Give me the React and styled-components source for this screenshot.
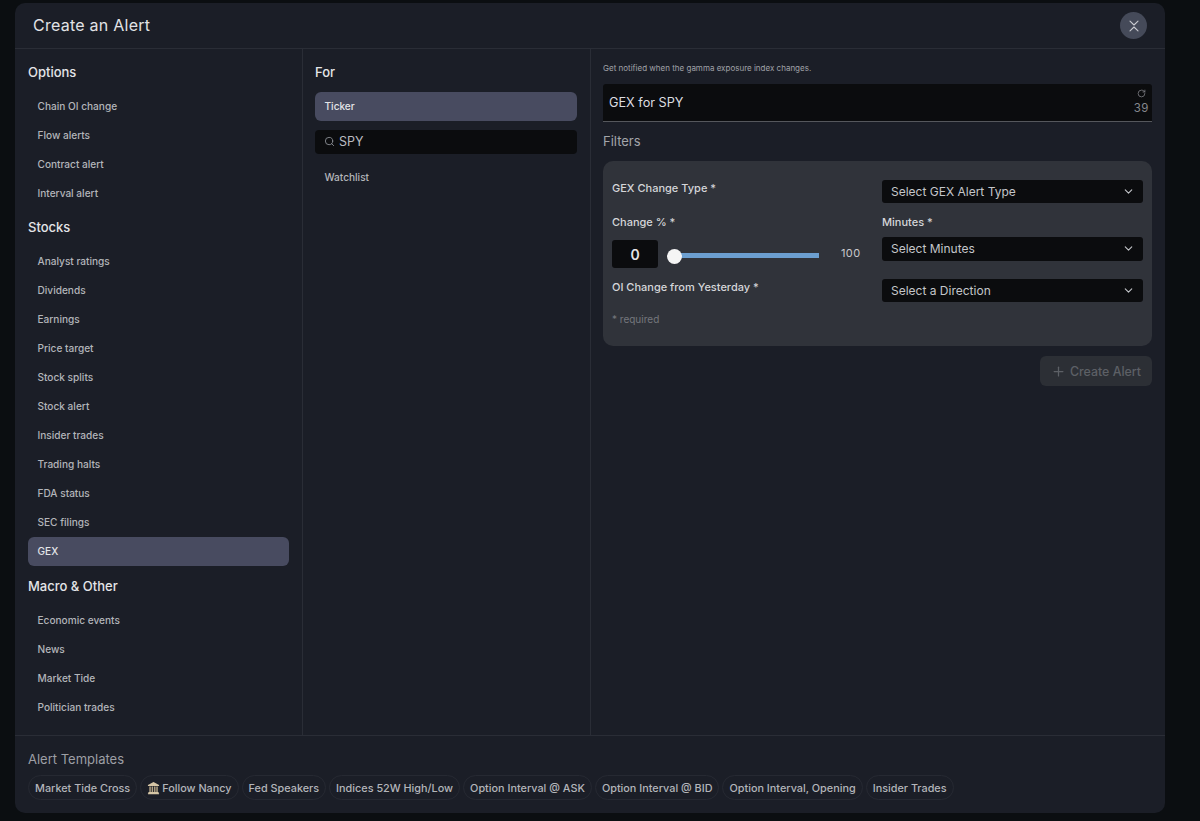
import React from 'react';
import styled, { createGlobalStyle } from 'styled-components';
import { Search, ChevronDown, RotateCw, Plus } from 'lucide-react';

const GlobalStyle = createGlobalStyle`
  html, body {
    margin: 0;
    background: #0b0e11;
    font-family: Inter, "Liberation Sans", sans-serif;
  }
  * { box-sizing: border-box; }
`;

const SECTIONS = [
  { title: 'Options', items: ['Chain OI change', 'Flow alerts', 'Contract alert', 'Interval alert'] },
  {
    title: 'Stocks',
    items: ['Analyst ratings', 'Dividends', 'Earnings', 'Price target', 'Stock splits', 'Stock alert', 'Insider trades', 'Trading halts', 'FDA status', 'SEC filings', 'GEX'],
  },
  { title: 'Macro & Other', items: ['Economic events', 'News', 'Market Tide', 'Politician trades'] },
];

const TEMPLATES = ['Market Tide Cross', 'Follow Nancy', 'Fed Speakers', 'Indices 52W High/Low', 'Option Interval @ ASK', 'Option Interval @ BID', 'Option Interval, Opening', 'Insider Trades'];

const BankIcon = () => (
  <svg width="13" height="14" viewBox="0 0 14 14" preserveAspectRatio="none">
    <path d="M7 1 L13 4 V5 H1 V4 Z" fill="#d6c6a6" />
    <path d="M2.5 5.5h1.6v5.5H2.5zM5 5.5h1.6v5.5H5zM7.6 5.5h1.6v5.5H7.6zM10 5.5h1.6v5.5H10z" fill="#b3a383" />
    <path d="M1.5 11h11v1.2h-11zM1 12.2h12v1H1z" fill="#d6c6a6" />
  </svg>
);

// the close mark has a small gap where the two strokes would cross
const CloseIcon = () => (
  <svg width="14" height="14" viewBox="0 0 14 14" fill="none" stroke="#c9cad0" strokeWidth="1.1" strokeLinecap="round" strokeLinejoin="round">
    <path d="M3 2.2 7 6l4-3.8" />
    <path d="M3 11.8 7 8l4 3.8" />
  </svg>
);

const Select = ({ label }) => (
  <SelectBox>
    <span>{label}</span>
    <ChevronDown size={13} />
  </SelectBox>
);

const App = () => (
  <Modal>
    <GlobalStyle />
    <Header>
      <Title>Create an Alert</Title>
      <CloseButton><CloseIcon /></CloseButton>
    </Header>

    <Columns>
      <Column>
        {SECTIONS.map((section) => (
          <Section key={section.title}>
            <Heading>{section.title}</Heading>
            <List>
              {section.items.map((item) => (
                <Item key={item} $active={item === 'GEX'}>{item}</Item>
              ))}
            </List>
          </Section>
        ))}
      </Column>

      <MiddleColumn>
        <Heading>For</Heading>
        <List>
          <Item $active>Ticker</Item>
          <SearchBox>
            <Search size={11} color="#8a8d94" />
            <span>SPY</span>
          </SearchBox>
          <Item>Watchlist</Item>
        </List>
      </MiddleColumn>

      <MainColumn>
        <Hint>Get notified when the gamma exposure index changes.</Hint>
        <NameField>
          <span>GEX for SPY</span>
          <Counter>
            <RotateCw size={9} />
            <span>39</span>
          </Counter>
        </NameField>
        <FiltersTitle>Filters</FiltersTitle>
        <FilterCard>
          <FieldLabel>GEX Change Type *</FieldLabel>
          <Select label="Select GEX Alert Type" />

          <ChangeField>
            <FieldLabel>Change % *</FieldLabel>
            <SliderRow>
              <NumberBox>0</NumberBox>
              <Slider>
                <Thumb />
              </Slider>
              <SliderMax>100</SliderMax>
            </SliderRow>
          </ChangeField>
          <MinutesField>
            <FieldLabel>Minutes *</FieldLabel>
            <Select label="Select Minutes" />
          </MinutesField>

          <FieldLabel>OI Change from Yesterday *</FieldLabel>
          <Select label="Select a Direction" />

          <Required>* required</Required>
        </FilterCard>
        <Actions>
          <CreateButton><Plus size={15} />Create Alert</CreateButton>
        </Actions>
      </MainColumn>
    </Columns>

    <Footer>
      <FooterTitle>Alert Templates</FooterTitle>
      <Chips>
        {TEMPLATES.map((name) => (
          <Chip key={name}>
            {name === 'Follow Nancy' && <BankIcon />}
            {name}
          </Chip>
        ))}
      </Chips>
    </Footer>
  </Modal>
);

export default App;

const Modal = styled.div`
  width: 1150px;
  height: 810px;
  margin: 3px 0 0 15px;
  background: #1b1e27;
  border-radius: 10px;
  display: flex;
  flex-direction: column;
  overflow: hidden;
`;

const Header = styled.header`
  height: 46px;
  flex: none;
  display: flex;
  align-items: center;
  justify-content: space-between;
  padding: 0 18px;
  border-bottom: 1px solid #2a2d36;
`;

const Title = styled.h1`
  margin: 0 0 2px;
  font-size: 16px;
  font-weight: 400;
  letter-spacing: 0.25px;
  color: #e2e3e6;
`;

const CloseButton = styled.button`
  width: 27px;
  height: 27px;
  padding: 0;
  border: 0;
  border-radius: 50%;
  background: #454a59;
  display: flex;
  align-items: center;
  justify-content: center;
`;

const Columns = styled.div`
  flex: 1;
  min-height: 0;
  display: grid;
  grid-template-columns: 288px 288px 1fr;
`;

const Column = styled.section`
  padding: 13px 13px 0 13px;
  border-right: 1px solid #2a2d36;
`;

const MiddleColumn = styled(Column)`
  padding-left: 12px;
`;

const MainColumn = styled.section`
  padding: 13px 13px 0 12px;
  display: flex;
  flex-direction: column;
`;

const Section = styled.div`
  margin-bottom: 9.75px;
`;

const Heading = styled.h2`
  margin: 0 0 9.5px;
  height: 20px;
  line-height: 20px;
  font-size: 13px;
  font-weight: 500;
  color: #e4e5e8;
`;

const List = styled.div`
  display: flex;
  flex-direction: column;
`;

const Item = styled.div`
  height: 29px;
  padding: 0 9.5px;
  display: flex;
  align-items: center;
  border-radius: 6px;
  font-size: 10.1px;
  font-weight: 500;
  color: ${(p) => (p.$active ? '#e4e5e8' : '#b3b5ba')};
  background: ${(p) => (p.$active ? '#484b60' : 'transparent')};
`;

const SearchBox = styled.div`
  height: 24px;
  margin: 9px 0 9px;
  padding: 0 9px;
  display: flex;
  align-items: center;
  gap: 4px;
  border-radius: 4px;
  background: #0b0c0e;
  font-size: 12.5px;
  color: #b9bbc0;
`;

const Hint = styled.p`
  margin: 0 0 10px;
  height: 12px;
  line-height: 12px;
  font-size: 8px;
  color: #a0a2a8;
`;

const NameField = styled.div`
  height: 38px;
  padding: 0 6px;
  display: flex;
  align-items: center;
  justify-content: space-between;
  background: #0b0c0e;
  border-radius: 3px 3px 0 0;
  border-bottom: 1px solid #55575c;
  font-size: 12.7px;
  color: #dcdde0;
`;

const Counter = styled.div`
  display: flex;
  flex-direction: column;
  align-items: center;
  gap: 3px;
  margin: 0 -3px 2px 0;
  font-size: 11.5px;
  letter-spacing: 0.5px;
  color: #85878d;
`;

const FiltersTitle = styled.h3`
  margin: 9px 0 10px;
  height: 20px;
  line-height: 20px;
  font-size: 13px;
  font-weight: 400;
  color: #a3a5aa;
`;

const FilterCard = styled.div`
  height: 185px;
  padding: 19px 9px 0 9px;
  background: #30333a;
  border-radius: 10px;
  display: grid;
  grid-template-columns: 270px 261px;
  grid-template-rows: 23px 76px 23px auto;
  align-content: start;
`;

const FieldLabel = styled.label`
  display: block;
  height: 16px;
  line-height: 16px;
  font-size: 11px;
  font-weight: 500;
  color: #d5d6d9;
`;

const ChangeField = styled.div`
  padding-top: 11px;
`;

const SelectBox = styled.div`
  height: 23px;
  padding: 0 8px 1px 9px;
  display: flex;
  align-items: center;
  justify-content: space-between;
  border-radius: 3px;
  background: #0b0c0e;
  font-size: 12px;
  color: #c4c6ca;
`;

const MinutesField = styled.div`
  padding-top: 11px;

  ${SelectBox} {
    height: 24px;
    margin-top: 7px;
  }
`;

const SliderRow = styled.div`
  display: flex;
  align-items: center;
  margin-top: 10px;
`;

const NumberBox = styled.div`
  width: 46px;
  height: 28px;
  display: flex;
  align-items: center;
  justify-content: center;
  border-radius: 3px;
  background: #0b0c0e;
  font-size: 14px;
  font-weight: 600;
  color: #e4e5e8;
`;

const Slider = styled.div`
  position: relative;
  width: 151px;
  height: 5px;
  margin: 2px 0 0 10px;
  background: #6c9fd0;
`;

const Thumb = styled.span`
  position: absolute;
  left: -1px;
  top: -4px;
  width: 15px;
  height: 15px;
  border-radius: 50%;
  background: #f5f5f5;
`;

const SliderMax = styled.span`
  margin: 0 0 2px 22px;
  font-size: 11px;
  letter-spacing: 0.4px;
  color: #c8c9cc;
`;

const Required = styled.div`
  grid-column: 1 / 3;
  margin-top: 11px;
  font-size: 10px;
  color: #75777d;
`;

const Actions = styled.div`
  display: flex;
  justify-content: flex-end;
  margin-top: 10px;
`;

const CreateButton = styled.button`
  width: 112px;
  height: 30px;
  padding: 0;
  border: 0;
  border-radius: 6px;
  background: #2c2f35;
  color: #5d6066;
  font-family: inherit;
  font-size: 12.4px;
  font-weight: 500;
  display: flex;
  align-items: center;
  justify-content: center;
  gap: 4px;
`;

const Footer = styled.footer`
  height: 78px;
  flex: none;
  padding: 13px 13px 0;
  border-top: 1px solid #2a2d36;
`;

const FooterTitle = styled.h3`
  margin: 0 0 6px;
  height: 20px;
  line-height: 20px;
  font-size: 13px;
  font-weight: 400;
  color: #9d9fa5;
`;

const Chips = styled.div`
  display: flex;
  gap: 3px;
`;

const Chip = styled.div`
  height: 25px;
  padding: 0 6px;
  display: flex;
  align-items: center;
  gap: 2px;
  border: 1px solid #262932;
  border-radius: 13px;
  font-size: 10.85px;
  font-weight: 500;
  color: #b3b5ba;
  white-space: nowrap;
`;
